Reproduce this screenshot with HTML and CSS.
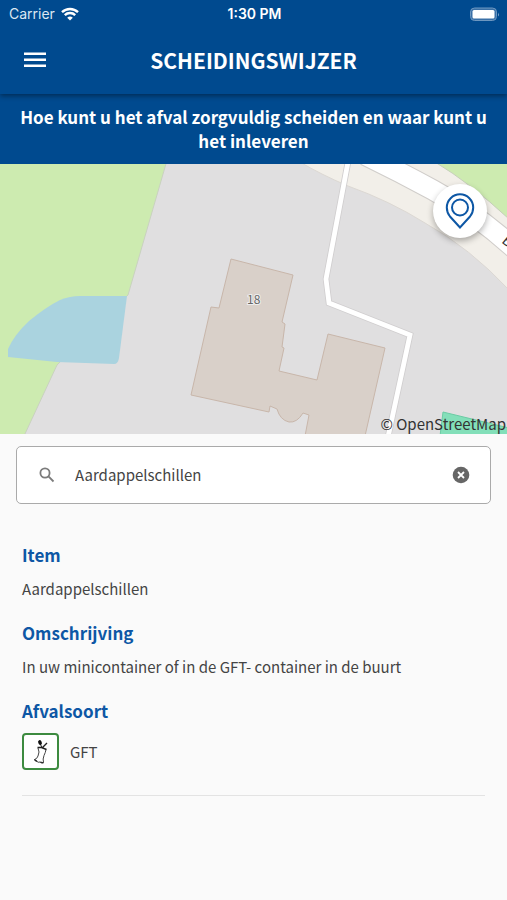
FILE: index.html
```html
<!DOCTYPE html>
<html lang="nl">
<head>
    <meta charset="UTF-8">
    <meta name="viewport" content="width=device-width, initial-scale=1.0">
    <title>Scheidingswijzer</title>
    <link rel="stylesheet" href="styles.css">
</head>
<body>
    <header class="header">
        <div class="status-bar">
            <div class="carrier">
                <span>Carrier</span>
                <svg width="18" height="14" viewBox="0 0 18 14" fill="none" stroke="#fff" stroke-width="2.4">
                    <path d="M1 5.2a11.5 11.5 0 0 1 16 0"/>
                    <path d="M3.8 8.2a7.4 7.4 0 0 1 10.4 0"/>
                    <path d="M9 13.6L6.2 10.8a4 4 0 0 1 5.6 0z" fill="#fff" stroke="none"/>
                </svg>
            </div>
            <span class="time">1:30 PM</span>
            <svg class="battery" width="31" height="15" viewBox="0 0 31 15">
                <rect x="1.5" y="1" width="26" height="12.5" rx="4" fill="#3a70a7" stroke="#6d97c0" stroke-width="1"/>
                <rect x="3.5" y="3" width="22" height="8.5" rx="1.5" fill="#fff"/>
                <path d="M29 5.500q1.800 2 0 4z" fill="#7fa3c8"/>
            </svg>
        </div>
        <div class="nav-bar">
            <button type="button" class="menu-button" aria-label="Menu">
                <svg width="24" height="18" viewBox="0 0 24 18" fill="#fff">
                    <path d="M1 1.500h22v2.400H1zM1 7.500h22v2.400H1zM1 13.500h22v2.400H1z"/>
                </svg>
            </button>
            <h1>SCHEIDINGSWIJZER</h1>
        </div>
    </header>

    <p class="intro">Hoe kunt u het afval zorgvuldig scheiden en waar kunt u het inleveren</p>

    <div class="map">
        <svg class="map-canvas" viewBox="0 0 507 270" preserveAspectRatio="xMidYMid slice">
            <rect width="507" height="270" fill="#e0dfe0"/>
            <!-- grass and water -->
            <path d="M-2 -2H166.500L128 131L57 201L24 272H-2z" fill="#cdebb0" stroke="#c9d2bf"/>
            <path d="M8 193V185Q14 171 29 157Q46 143 60 136Q70 132 80 132H127L119 194Q118 200 114 200L57 198z" fill="#aad3df"/>
            <!-- roads -->
            <path d="M300 -2Q320 10 348 22Q390 37 425 59Q470 84 509 126V-2z" fill="#f2efe9" stroke="#dcd8d3"/>
            <path d="M435 -2Q470 19 509 55V-2z" fill="#cdebb0" stroke="#c6cfba"/>
            <path d="M365 -9Q400 8 433 26Q475 49 515 85" fill="none" stroke="#d0cdca" stroke-width="21.500"/>
            <path d="M365 -9Q400 8 433 26Q475 49 515 85" fill="none" stroke="#fff" stroke-width="19.500"/>
            <path d="M348 -2L326 115L329 139L410 171L388 273" fill="none" stroke="#d0cecf" stroke-width="6.500"/>
            <path d="M348 -2L326 115L329 139L410 171L388 273" fill="none" stroke="#fff" stroke-width="4.800"/>
            <!-- buildings -->
            <path d="M231 95L293 111L282 158L285 160L282 183L284 184L279 207L317 216L328 170L385 184L365 272H305L309 251L303 249Q297 259 289 258Q280 256 277 245L270 242L269 248L191 231L211 143L219 144z" fill="#d9d0c9" stroke="#c8b6aa"/>
            <path d="M443 248L509 264V272H440z" fill="#83dfb9" stroke="#6bcba4"/>
            <text class="house-number" x="247" y="140">18</text>
            <text class="road-name" x="501" y="78" transform="rotate(40 501 78)">B</text>
        </svg>
        <button type="button" class="location-button" aria-label="Mijn locatie">
            <svg width="30" height="36" viewBox="0 0 30 36" fill="none" stroke="#0d57a5" stroke-width="2">
                <path d="M15 34.500L5 23.500Q1.800 19.500 1.800 14.500a13.200 13.200 0 0 1 26.400 0Q28.200 19.500 25 23.500z"/>
                <circle cx="15" cy="14.500" r="8"/>
            </svg>
        </button>
        <a class="attribution" href="#">© OpenStreetMap</a>
    </div>

    <main class="content">
        <form class="search">
            <svg width="16" height="16" viewBox="0 0 16 16" fill="none" stroke="#7b7b7b" stroke-width="1.800">
                <circle cx="6" cy="6" r="4.600"/>
                <path d="M9.200 9.200L14.500 14.500"/>
            </svg>
            <input type="text" class="search-input" aria-label="Zoek afval" value="Aardappelschillen">
            <button type="reset" class="clear-button" aria-label="Wissen">
                <svg width="18" height="18" viewBox="0 0 18 18">
                    <circle cx="9" cy="9" r="8.300" fill="#666"/>
                    <path d="M6 6L12 12M12 6L6 12" stroke="#fff" stroke-width="1.800"/>
                </svg>
            </button>
        </form>

        <section class="result">
            <h2>Item</h2>
            <p>Aardappelschillen</p>
            <h2>Omschrijving</h2>
            <p>In uw minicontainer of in de GFT- container in de buurt</p>
            <h2>Afvalsoort</h2>
            <div class="waste-type">
                <span class="waste-icon">
                    <svg width="18" height="26" viewBox="0 0 18 26" fill="none" stroke="#444" stroke-width="1">
                        <path d="M6 9Q8 13 6 17Q5 20 2.500 20.500Q2.500 22 4.500 22Q6 24 8 23Q10 25 11.500 23.500Q10.500 20 12 16.500Q13.500 13.500 14 10.500"/>
                        <path d="M5.500 8.500L9.500 8.500L14.500 10.500M10 9L15 4" stroke="#222" stroke-width="1.400"/>
                        <path d="M10 9L8 4" stroke="#222"/>
                        <ellipse cx="8" cy="3.500" rx="1.800" ry="2.500" fill="#111" stroke="none" transform="rotate(-20 8 3.500)"/>
                        <path d="M2.500 20.500L5 22.500M8.500 23L11.500 24" stroke="#222" stroke-width="1.300"/>
                    </svg>
                </span>
                <span>GFT</span>
            </div>
        </section>
    </main>
</body>
</html>
```
FILE: styles.css
```css
* {
    box-sizing: border-box;
}

body {
    margin: 0;
    background-color: #fafafa;
    color: #444;
    font-family: "Noto Sans CJK JP", "Noto Sans", sans-serif;
    font-size: 15px;
    line-height: 24px;
}

button {
    display: flex;
    align-items: center;
    justify-content: center;
    padding: 0;
    border: none;
    background: none;
    cursor: pointer;
}

h1, h2, p {
    margin: 0;
}

.header {
    position: relative;
    height: 94px;
    background-color: #004a8f;
    color: #fff;
    box-shadow: 0 2px 5px rgba(0, 0, 0, 0.4);
}

.status-bar {
    display: grid;
    grid-template-columns: 1fr auto 1fr;
    align-items: center;
    height: 28px;
    padding: 0 7px 0 9px;
    font-family: Inter, sans-serif;
    font-size: 14px;
}

.carrier {
    display: flex;
    align-items: center;
    gap: 6px;
    color: #dce7f2;
}

.time {
    font-weight: 600;
}

.battery {
    justify-self: end;
}

.nav-bar {
    display: grid;
    grid-template-columns: 24px 1fr 24px;
    align-items: center;
    height: 64px;
    padding: 0 23px;
}

.nav-bar h1 {
    font-size: 21px;
    font-weight: 700;
    text-align: center;
}

.intro {
    padding: 11px 16px;
    background-color: #004a8f;
    color: #fff;
    font-size: 17px;
    font-weight: 700;
    text-align: center;
}

.map {
    position: relative;
    height: 270px;
}

.map-canvas {
    display: block;
    width: 100%;
    height: 100%;
}

.house-number {
    font-size: 12px;
    fill: #666;
    stroke: #eee;
    stroke-width: 2px;
    paint-order: stroke;
}

.road-name {
    font-size: 14px;
    fill: #333;
}

.location-button {
    position: absolute;
    top: 20px;
    right: 20px;
    width: 54px;
    height: 54px;
    border-radius: 50%;
    background-color: #fff;
    box-shadow: 0 3px 6px rgba(0, 0, 0, 0.3);
}

.attribution {
    position: absolute;
    right: 1px;
    bottom: -2px;
    color: #333;
    text-decoration: none;
}

.content {
    padding: 12px 16px;
}

.search {
    display: flex;
    align-items: center;
    height: 58px;
    padding: 0 20px 0 22px;
    border: 1px solid #aaa;
    border-radius: 5px;
    background-color: #fff;
}

.search-input {
    flex: 1;
    min-width: 0;
    padding: 0 20px;
    border: none;
    outline: none;
    background: none;
    color: #444;
    font: inherit;
}

.result {
    margin: 39px 6px 0;
    padding-bottom: 25px;
    border-bottom: 1px solid #e3e3e3;
}

.result h2 {
    margin-bottom: 10px;
    color: #0d57a5;
    font-size: 17px;
    font-weight: 700;
}

.result p {
    margin-bottom: 20px;
}

.waste-type {
    display: flex;
    align-items: center;
    gap: 11px;
}

.waste-icon {
    display: flex;
    align-items: center;
    justify-content: center;
    width: 37px;
    height: 37px;
    border: 2px solid #3d8b40;
    border-radius: 4px;
    background-color: #fff;
}
```
